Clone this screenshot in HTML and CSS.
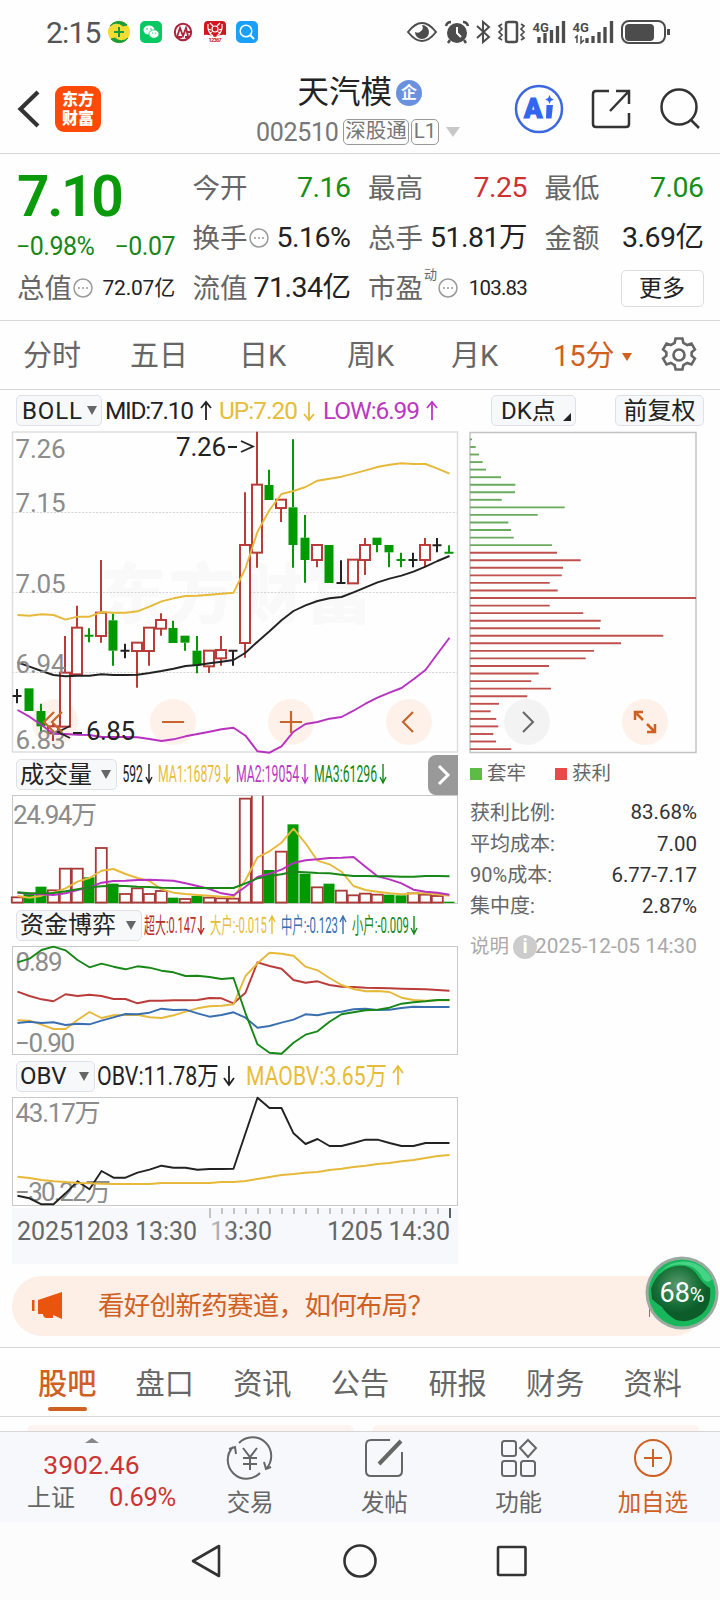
FILE: index.html
```html
<!DOCTYPE html>
<html lang="zh-CN">
<head>
<meta charset="utf-8">
<title>天汽模 002510</title>
<link rel="stylesheet" href="styles.css">
</head>
<body>
<header class="status">
  <span class="clock">2:15</span>
  <svg class="apps" width="152" height="26" viewBox="107 19 152 26">
    <circle cx="119" cy="32" r="11" fill="#f5dc32"/><path d="M110 26a11 11 0 0 1 17-1l-4 1a9 9 0 0 0-13 0zM128 38a11 11 0 0 1-17 1l4-1a9 9 0 0 0 13 0z" fill="#1b9c3c" stroke="#1b9c3c"/><path d="M119 27v10M114 32h10" stroke="#1b9c3c" stroke-width="2"/>
    <rect x="140" y="21" width="22" height="22" rx="5" fill="#07c862"/><ellipse cx="149" cy="30" rx="5.5" ry="4.6" fill="#fff"/><ellipse cx="154" cy="34" rx="5" ry="4.2" fill="#fff" stroke="#07c862" stroke-width=".8"/><circle cx="147" cy="29" r=".8" fill="#07c862"/><circle cx="151" cy="29" r=".8" fill="#07c862"/><circle cx="152.400" cy="33" r=".6" fill="#07c862"/><circle cx="155.600" cy="33" r=".6" fill="#07c862"/>
    <circle cx="183" cy="32" r="8.200" fill="#fff" stroke="#a9243a" stroke-width="2"/><path d="M177 37l3-9 3 8 3-8 2 8M178 37h4M185 37h5M187 32h5" fill="none" stroke="#a9243a" stroke-width="1.800"/>
    <path d="M208 21h14a4 4 0 0 1 4 4v10q-5-1-11 2-6-3-11-2v-10a4 4 0 0 1 4-4z" fill="#d0161f"/><circle cx="215" cy="29" r="3" fill="none" stroke="#fff" stroke-width="1.200"/><path d="M208 24q-1 8 5 12M222 24q1 8-5 12M210 23l3 3M220 23l-3 3M208 29l3 1M222 29l-3 1M209 33l3-1M221 33l-3-1" fill="none" stroke="#fff" stroke-width="1.200"/><text x="208.500" y="42" font-size="5.500" font-weight="700" fill="#d0161f" textLength="13">12367</text>
    <rect x="236" y="21" width="22" height="22" rx="5" fill="#18a0fb"/><circle cx="246" cy="31" r="5.800" fill="none" stroke="#fff" stroke-width="1.500"/><path d="M250 35l4 4" stroke="#fff" stroke-width="2"/>
  </svg>
  <svg class="signals" width="266" height="28" viewBox="406 18 266 28" fill="none" stroke="#4c4c4c" stroke-width="2">
    <path d="M408 32q14-18 28 0q-14 18-28 0z"/><path d="M422 25a7 7 0 1 1-7 7q4 2 6-1 3-2 1-6z" fill="#4c4c4c" stroke="none"/>
    <circle cx="457" cy="33" r="10" fill="#4c4c4c" stroke="none"/><path d="M457 27v6l4 4" stroke="#fff"/><path d="M446 26q1-4 5-4M463 22q4 0 5 4M450 40l-2 3M464 40l2 3" stroke-width="2.500"/>
    <path d="M477 26l12 11-6 5v-20l6 5-12 11"/>
    <rect x="506" y="22" width="11" height="20" rx="2" stroke-width="2.500"/><path d="M502 24l-3 2 3 3-3 3 3 3-3 3 3 2M521 24l3 2-3 3 3 3-3 3 3 3-3 2" stroke-width="1.700"/>
    <g stroke-width="3.300"><path d="M539 37v6M545 33v10M551.500 30v13M557.500 26v17M563.500 21v22"/><path d="M587 38v5M593 36v7M599 32v11M605 27v16M611.500 21v22"/></g>
    <path d="M575 38l2-2v7M581 36v7l3-3" stroke-width="1.500"/>
    <g fill="#4c4c4c" stroke="none" font-size="13" font-weight="700"><text x="532.500" y="31.500">4G</text><text x="572.500" y="31.500">4G</text></g>
    <rect x="622" y="21" width="43" height="22" rx="7"/><rect x="625" y="24" width="29" height="17" rx="4" fill="#4c4c4c" stroke="none"/><path d="M668.500 29v6" stroke-width="3"/>
  </svg>
</header>

<nav class="topbar">
  <div class="top-left">
    <svg width="24" height="38" viewBox="0 0 24 38"><path d="M21 2L3.500 19 21 36" fill="none" stroke="#333" stroke-width="4.200"/></svg>
    <div class="logo"><span>东方</span><span>财富</span></div>
  </div>
  <div class="top-title">
    <div class="name"><span>天汽模</span><i class="badge">企</i></div>
    <div class="code"><span class="num">002510</span><b class="tag">深股通</b><b class="tag l1">L1</b><i class="tri"></i></div>
  </div>
  <svg class="top-icons" width="190" height="50" viewBox="513 84 190 50" fill="none" stroke="#333" stroke-width="2.500">
    <circle cx="539" cy="109" r="23" stroke="#3b68e0"/><text x="524" y="118" font-size="27" font-weight="900" fill="#3366ee" stroke="#3366ee" stroke-width="1.200">A</text><path d="M546.500 105h6.500l-1.500 13.500h-5.500z" fill="#3366ee" stroke="none"/><path d="M549.500 95l1.300 3 3 1.500-3 1.500-1.300 3-1.300-3-3-1.500 3-1.500z" fill="#3366ee" stroke="none"/>
    <path d="M609 91h-13q-3 0-3 3v30q0 3 3 3h30q3 0 3-3v-11M629 104v-13h-13M629 91l-19 20"/>
    <circle cx="679" cy="107" r="17.500"/><path d="M691 120l8 8"/>
  </svg>
</nav>

<section class="quote">
  <div class="price-col"><div class="price">7.10</div><div class="change"><span>−0.98%</span><span>−0.07</span></div><div class="cell"><span class="lab">总值</span><svg class="dots" viewBox="0 0 20 20"><circle cx="10" cy="10" r="9"/><path d="M5 10h2M9 10h2M13 10h2"/></svg><span class="val small">72.07亿</span></div></div>
  <div class="q-col">
    <div class="cell"><span class="lab">今开</span><span class="val down">7.16</span></div>
    <div class="cell"><span class="lab">换手</span><svg class="dots" viewBox="0 0 20 20"><circle cx="10" cy="10" r="9"/><path d="M5 10h2M9 10h2M13 10h2"/></svg><span class="val">5.16%</span></div>
    <div class="cell"><span class="lab">流值</span><span class="val">71.34亿</span></div>
  </div>
  <div class="q-col">
    <div class="cell"><span class="lab">最高</span><span class="val up">7.25</span></div>
    <div class="cell"><span class="lab">总手</span><span class="val">51.81万</span></div>
    <div class="cell"><span class="lab">市盈</span><sup>动</sup><svg class="dots" viewBox="0 0 20 20"><circle cx="10" cy="10" r="9"/><path d="M5 10h2M9 10h2M13 10h2"/></svg><span class="val small pe">103.83</span></div>
  </div>
  <div class="q-col">
    <div class="cell"><span class="lab">最低</span><span class="val down">7.06</span></div>
    <div class="cell"><span class="lab">金额</span><span class="val">3.69亿</span></div>
    <div class="cell"><button class="more">更多</button></div>
  </div>
</section>

<nav class="periods">
  <span>分时</span><span>五日</span><span>日K</span><span>周K</span><span>月K</span><span class="on">15分<i></i></span>
  <svg width="36" height="36" viewBox="-18 -18 36 36" fill="none" stroke="#666" stroke-width="2.700"><path d="M-3.500-16h7l1 4.500 4 2.300 4.400-1.500 3.500 6-3.400 3v3.400l3.400 3-3.500 6-4.400-1.500-4 2.300-1 4.500h-7l-1-4.500-4-2.300-4.400 1.500-3.500-6 3.400-3v-3.400l-3.400-3 3.500-6 4.400 1.500 4-2.300z" transform="translate(0 -1) scale(.97)"/><circle r="5.500"/></svg>
</nav>

<main class="charts">
  <div class="left">
    <div class="head"><button class="pick w1"><span>BOLL</span><i></i></button>
      <svg width="350" height="41" viewBox="104 390 350 41" font-size="24.500">
        <g fill="#222"><text x="105" y="419" textLength="89">MID:7.10</text><path class="ar" stroke="#222" d="M206 420v-18m-5 6l5-6 5 6"/></g>
        <g fill="#e6bd3a"><text x="219" y="419" textLength="79">UP:7.20</text><path class="ar" stroke="#e6bd3a" d="M309 402v18m-5-6l5 6 5-6"/></g>
        <g fill="#b93ac0"><text x="323" y="419" textLength="97">LOW:6.99</text><path class="ar" stroke="#b93ac0" d="M432 420v-18m-5 6l5-6 5 6"/></g>
      </svg>
    </div>
    <svg id="kline" width="446" height="323" viewBox="12 431 446 323">
      <text x="100" y="618" font-size="66" font-weight="900" fill="#f9f9f9" textLength="272">东方财富</text>
      <path d="M12 512.500h446M12 592.500h446M12 672.500h446" stroke="#d4d4d4" stroke-dasharray="2 1.500"/>
      <rect x="12.500" y="432" width="445" height="320" fill="none" stroke="#dedede" stroke-width="1.500"/>
      <g fill="#fef1ea"><circle cx="55" cy="722" r="23"/><circle cx="173" cy="722" r="23"/><circle cx="291" cy="722" r="23"/><circle cx="409" cy="722" r="23"/></g>
      <g id="candles"></g>
      <g id="klines" class="ln"></g>
      <g class="axis"><text x="15.500" y="458" textLength="50">7.26</text><text x="15.500" y="512" textLength="50">7.15</text><text x="15.500" y="593" textLength="50">7.05</text><text x="15.500" y="673" textLength="50">6.94</text><text x="15.500" y="749" textLength="50">6.83</text></g>
      <g fill="#222" font-size="26"><text x="176" y="456" textLength="50">7.26</text><path class="ar" stroke="#222" d="M228 447h9M241 441l12 5.500-12 5.500"/><text x="86" y="740" textLength="49">6.85</text><path class="ar" stroke="#222" d="M73 733h9M70 726l-12 6 12 6"/></g>
      <g fill="none" stroke="#c7672d" stroke-width="2.200"><path d="M54 712l-10 10 10 10M62 712l-10 10 10 10M162 722h22M280 722h22M291 711v22M413 712l-10 10 10 10"/></g>
    </svg>
    <div class="head"><button class="pick w2"><span>成交量</span><i></i></button>
      <svg width="300" height="41" viewBox="121 754 300 41" font-size="24">
        <g fill="#222"><text transform="translate(122.500 782) scale(.5 1)">592</text><path class="ar thin" stroke="#222" d="M149 764v19m-3-6l3 6 3-6"/></g>
        <g fill="#e6bd3a"><text transform="translate(158 782) scale(.511 1)">MA1:16879</text><path class="ar thin" stroke="#e6bd3a" d="M227 764v19m-3-6l3 6 3-6"/></g>
        <g fill="#b93ac0"><text transform="translate(236 782) scale(.511 1)">MA2:19054</text><path class="ar thin" stroke="#b93ac0" d="M305 764v19m-3-6l3 6 3-6"/></g>
        <g fill="#178717"><text transform="translate(314 782) scale(.511 1)">MA3:61296</text><path class="ar thin" stroke="#178717" d="M383 764v19m-3-6l3 6 3-6"/></g>
      </svg>
      <div class="next"><svg width="14" height="22" viewBox="0 0 14 22"><path d="M3 2l9 9-9 9" fill="none" stroke="#fff" stroke-width="3"/></svg></div>
    </div>
    <svg id="vol" width="446" height="109" viewBox="12 795 446 109">
      <rect class="frame" x="12.500" y="795.500" width="445" height="108"/>
      <g class="axis"><text x="13" y="824" textLength="84">24.94万</text></g>
      <g id="bars"></g><g id="vlines" class="ln"></g>
    </svg>
    <div class="head tall"><button class="pick w3"><span>资金博弈</span><i></i></button>
      <svg width="300" height="42" viewBox="143 904 300 42" font-size="22">
        <g fill="#b82c2c"><text transform="translate(144 933) scale(.498 1)">超大:0.147</text><path class="ar thin" stroke="#b82c2c" d="M201 916v18m-3-6l3 6 3-6"/></g>
        <g fill="#e6bd3a"><text transform="translate(210 933) scale(.515 1)">大户:-0.015</text><path class="ar thin" stroke="#e6bd3a" d="M272 934v-18m-3 6l3-6 3 6"/></g>
        <g fill="#3a6faf"><text transform="translate(281 933) scale(.515 1)">中户:-0.123</text><path class="ar thin" stroke="#3a6faf" d="M343 934v-18m-3 6l3-6 3 6"/></g>
        <g fill="#178717"><text transform="translate(352 933) scale(.515 1)">小户:-0.009</text><path class="ar thin" stroke="#178717" d="M414 916v18m-3-6l3 6 3-6"/></g>
      </svg>
    </div>
    <svg id="fund" width="446" height="109" viewBox="12 946 446 109">
      <rect class="frame" x="12.500" y="946.500" width="445" height="108"/>
      <g class="axis"><text x="15.500" y="971" textLength="47">0.89</text><text x="15" y="1052" textLength="60">−0.90</text></g>
      <g id="flines" class="ln"></g>
    </svg>
    <div class="head tall"><button class="pick w4"><span>OBV</span><i></i></button>
      <svg width="320" height="42" viewBox="96 1055 320 42" font-size="26">
        <g fill="#222"><text transform="translate(97 1085) scale(.823 1)">OBV:11.78万</text><path class="ar" stroke="#222" d="M229 1066v19m-5-7l5 7 5-7"/></g>
        <g fill="#e6bd3a"><text transform="translate(246 1085) scale(.814 1)">MAOBV:3.65万</text><path class="ar" stroke="#e6bd3a" d="M398 1085v-19m-5 7l5-7 5 7"/></g>
      </svg>
    </div>
    <svg id="obv" width="446" height="109" viewBox="12 1097 446 109">
      <rect class="frame" x="12.500" y="1097.500" width="445" height="108"/>
      <g class="axis"><text x="15.500" y="1122" textLength="85">43.17万</text><text x="15" y="1201" textLength="96">−30.22万</text></g>
      <g id="olines" class="ln"></g>
    </svg>
    <svg class="time" width="446" height="56" viewBox="12 1208 446 56">
      <g id="ticks"></g>
      <g fill="#666" font-size="25"><text x="17" y="1240" textLength="180">20251203 13:30</text><text x="210" y="1240" textLength="62" fill="url(#fade)">13:30</text><text x="327" y="1240" textLength="123">1205 14:30</text></g>
      <defs><linearGradient id="fade"><stop offset="0" stop-color="#ccc"/><stop offset=".4" stop-color="#666"/></linearGradient></defs>
    </svg>
  </div>

  <aside class="right">
    <div class="head rhead"><button class="pick dk"><span>DK点</span><i></i></button><button class="pick fq"><span>前复权</span></button></div>
    <svg id="chips" width="229" height="323" viewBox="469 431 229 323">
      <rect x="470" y="432.500" width="226" height="320" fill="none" stroke="#c4c4c4" stroke-width="1.500"/>
      <g id="chiplines"></g>
      <circle cx="527" cy="722" r="23" fill="#f3f3f3"/><path d="M523 712l10 10-10 10" fill="none" stroke="#666" stroke-width="2"/>
      <circle cx="645" cy="722" r="23" fill="#fef1ea"/><path d="M643 712h-8v8M635 712l8 8M647 732h8v-8M655 732l-8-8" fill="none" stroke="#d0601f" stroke-width="2.500"/>
    </svg>
    <div class="legend"><span><i class="g"></i>套牢</span><span><i class="r"></i>获利</span></div>
    <dl>
      <div><dt>获利比例:</dt><dd>83.68%</dd></div>
      <div><dt>平均成本:</dt><dd>7.00</dd></div>
      <div><dt>90%成本:</dt><dd>6.77-7.17</dd></div>
      <div><dt>集中度:</dt><dd>2.87%</dd></div>
    </dl>
    <div class="note"><span>说明</span><i>i</i><time>2025-12-05 14:30</time></div>
  </aside>
</main>

<section class="promo">
  <div class="banner">
    <svg width="32" height="28" viewBox="0 0 32 28"><path d="M30 0v27l-9-4v3h-7q-3-1-3-4H6V8zM0 8h2.500v11H0z" fill="#e9550c"/></svg>
    <span>看好创新药赛道，如何布局？</span><i></i>
  </div>
  <div class="ball"><svg viewBox="0 0 74 74" width="74" height="74"><defs><radialGradient id="orb" cx=".45" cy=".35"><stop offset="0" stop-color="#5d9b70"/><stop offset=".7" stop-color="#177038"/><stop offset="1" stop-color="#0d5d2b"/></radialGradient></defs><circle cx="37" cy="37" r="36.500" fill="#9aaa9f"/><circle cx="37" cy="37" r="33.500" fill="#19b75b"/><path d="M6 33a31 31 0 0 1 34-23q8 2 13 10t12 12q2 17-8 26-13 10-26 6-10-6-14-13-6-4-10-8z" fill="url(#orb)"/><path d="M12 20q12-17 33-14 14 3 22 17-4 6-9 0-6-13-18-14-16-3-28 11z" fill="#45d385"/></svg><b>68<small>%</small></b></div>
</section>

<nav class="tabs"><span class="on">股吧</span><span>盘口</span><span>资讯</span><span>公告</span><span>研报</span><span>财务</span><span>资料</span></nav>
<div class="feed"><i></i><i></i></div>

<footer class="bottom">
  <div class="index"><i></i><strong>3902.46</strong><div><span>上证</span><em>0.69%</em></div></div>
  <div class="act"><svg viewBox="0 0 44 44"><path d="M11 7a18 18 0 0 1 27 26M32 37a18 18 0 0 1-27-26M1 13l6-2 1 7M43 31l-5 2-2-7M15 12l7 9 7-9M22 21v13M15 22h14M15 28h14"/></svg><span>交易</span></div>
  <div class="act"><svg viewBox="0 0 44 44"><path d="M28 4H9Q4 4 4 9v26q0 5 5 5h26q5 0 5-5V16"/><path d="M17 28L39 5" stroke-width="4"/></svg><span>发帖</span></div>
  <div class="act"><svg viewBox="0 0 44 44"><rect x="5" y="5" width="14" height="15" rx="2.500"/><rect x="5" y="25" width="14" height="15" rx="2.500"/><rect x="24" y="25" width="14" height="15" rx="2.500"/><path d="M31 4l8 8-8 9-8-9z"/></svg><span>功能</span></div>
  <div class="act hot"><svg viewBox="0 0 44 44"><circle cx="22" cy="22" r="18"/><path d="M22 13v18M13 22h18"/></svg><span>加自选</span></div>
</footer>
<div class="sysnav">
  <svg width="336" height="36" viewBox="191 1543 336 36" fill="none" stroke="#333" stroke-width="2.600" stroke-linejoin="round"><path d="M219 1546v30l-26-15z"/><circle cx="360" cy="1561" r="15.500"/><rect x="498" y="1547" width="27.500" height="28" rx="1"/></svg>
</div>
<script src="app.js"></script>
</body>
</html>
```
FILE: styles.css
```css
* { box-sizing: border-box; }
body { margin: 0; width: 720px; height: 1600px; overflow: hidden; background: #fefefe; color: #333; font-family: Roboto, "Noto Sans CJK SC", sans-serif; line-height: 1; }
svg { display: block; flex: none; overflow: visible; }
i, em { font-style: normal; }
button { font: inherit; color: inherit; padding: 0; }

.status { height: 64px; display: flex; align-items: center; padding: 0 48px 0 46px; }
.clock { font-size: 30px; width: 61px; color: #555; letter-spacing: -0.8px; padding-top: 1px; }
.signals { margin-left: auto; }

.topbar { height: 90px; border-bottom: 1px solid #d6d6d6; display: grid; grid-template-columns: 257px 256px 1fr; align-items: start; }
.top-left { display: flex; align-items: center; gap: 14px; padding: 22px 0 0 17px; }
.logo { width: 46px; height: 46px; background: #fd4a08; border-radius: 9px; display: flex; flex-direction: column; justify-content: center; align-items: center; color: #fff; font-weight: 900; font-size: 16px; line-height: 19px; }
.name { display: flex; align-items: center; gap: 4px; height: 34px; margin-top: 12px; padding-left: 40.500px; font-size: 31.500px; color: #222; white-space: nowrap; }
.badge { width: 26px; height: 26px; border-radius: 50%; background: #6a90e0; color: #fff; font-size: 16px; font-weight: 700; display: grid; place-items: center; line-height: 1; }
.code { display: flex; align-items: center; height: 26px; margin-top: 9px; font-size: 25px; color: #777; }
.num { width: 86px; margin-left: -1px; margin-right: 1px; letter-spacing: -0.300px; }
.tag { height: 26px; border: 1.500px solid #999; border-radius: 5px; font-weight: 400; font-size: 20.500px; line-height: 23px; width: 66px; text-align: center; white-space: nowrap; }
.tag.l1 { width: 28px; margin-left: 2px; }
.tri { border: 7.500px solid transparent; border-top: 10px solid #c8c8c8; border-bottom: 0; margin-left: 7px; }
.top-icons { margin-top: 20px; }

.quote { height: 167px; border-bottom: 1px solid #d6d6d6; display: grid; grid-template-columns: 158px 158px 159px 159px; column-gap: 17.500px; padding: 9px 16px 0 17px; }
.price { height: 66px; font-size: 57px; line-height: 67px; font-weight: 600; color: #0a9a0a; letter-spacing: -2.400px; }
.change { height: 34px; display: flex; justify-content: space-between; align-items: center; font-size: 25px; color: #178717; letter-spacing: -0.500px; margin-left: -1px; padding-top: 1px; }
.cell { height: 50px; display: flex; align-items: center; color: #222; }
.lab { font-size: 27.500px; color: #666; padding-top: 2px; }
.val { margin-left: auto; font-size: 28.500px; letter-spacing: -0.500px; white-space: nowrap; padding-top: 1px; }
.val.small { font-size: 21px; letter-spacing: -0.200px; }
.val.pe { font-size: 20.500px; letter-spacing: -0.800px; }
.down { color: #178f17; }
.up { color: #cf3131; }
.dots { width: 20px; height: 20px; margin-left: 1px; fill: none; stroke: #999; stroke-width: 1.500; }
sup { font-size: 13px; color: #666; align-self: flex-start; margin: 5px 0 0 1px; }
.more { margin-left: auto; width: 83px; height: 37px; border: 1.500px solid #ddd; border-radius: 5px; background: #fff; color: #222; font-size: 23px; }

.periods { height: 69px; border-bottom: 1px solid #d6d6d6; display: grid; grid-template-columns: 107px 109px 108px 104px 102px 108px 36px; align-items: center; padding-left: 23px; font-size: 29px; color: #666; }
.periods span { padding-top: 3px; }
.periods .on { color: #d0601f; display: flex; align-items: center; gap: 7px; }
.periods .on i { border: 5px solid transparent; border-top: 8px solid #d0601f; border-bottom: 0; }

.charts { height: 874px; display: grid; grid-template-columns: 446px 236px; column-gap: 11px; padding-left: 12px; }
.head { height: 41px; display: flex; align-items: center; padding: 0 0 0 4px; }
.head.tall { height: 42px; }
.pick { height: 31px; border: 1.500px solid #dfe1e6; border-radius: 5px; background: #f7f8fa; color: #222; display: flex; align-items: center; justify-content: space-between; padding: 0 5px 0 3px; font-size: 24px; line-height: 28px; white-space: nowrap; flex: none; }
.pick i { border: 5.500px solid transparent; border-top: 9px solid #666; border-bottom: 0; }
.w1 { width: 86px; margin-right: 2px; padding: 0 4px 0 5px; } .w1 span { letter-spacing: 0.900px; }
.w2 { width: 101px; margin-right: 4px; }
.w3 { width: 126px; margin-right: 1px; }
.w4 { width: 79px; margin-right: 1px; }
.next { width: 30px; height: 40px; margin-left: auto; background: #999; border-radius: 8px 0 0 8px; display: grid; place-items: center; }
.ar { fill: none; stroke-width: 1.800; }
.thin { stroke-width: 1.400; }
.axis { fill: #8c8c8c; font-size: 26px; }
.frame { fill: none; stroke: #c8c8c8; }
.ln path { fill: none; stroke-width: 1.900; stroke-linejoin: round; }
.time { margin-top: 2px; background: #f7f8fb; }

.rhead { padding: 0 1px 0 22px; justify-content: space-between; }
.pick.dk { width: 85px; padding: 0 4px 0 9px; }
.dk i { border: 0; border-left: 8px solid transparent; border-bottom: 8px solid #222; align-self: flex-end; margin-bottom: 4px; }
.pick.fq { width: 89px; padding: 0; justify-content: center; }
.legend { height: 39px; display: flex; align-items: center; gap: 29px; padding-left: 1px; font-size: 19.500px; color: #666; }
.legend span { display: flex; align-items: center; gap: 5px; }
.legend i { width: 12px; height: 12px; background: #5dbb46; }
.legend .r { background: #e84a4a; }
dl { margin: 4px 0 0; width: 228px; }
dl div { height: 31.200px; display: flex; align-items: center; justify-content: space-between; font-size: 20px; }
dt { color: #666; padding-left: 1px; } dd { margin: 0; color: #333; font-size: 20.500px; }
.note { height: 50px; width: 228px; display: flex; align-items: center; font-size: 19.500px; color: #aaa; padding-left: 1px; }
.note i { width: 24px; height: 24px; border-radius: 50%; background: #ccc; color: #fff; font-weight: 700; text-align: center; line-height: 24px; margin: 0 -3px 0 4px; flex: none; }
.note time { margin-left: auto; white-space: nowrap; font-size: 20.800px; }

.promo { height: 84px; border-bottom: 1px solid #d6d6d6; padding: 12px 16px 0 12px; position: relative; }
.banner { height: 60px; border-radius: 30px; background: #fdeee6; display: flex; align-items: center; gap: 34px; padding: 0 54px 0 20px; font-size: 26.500px; color: #d0601f; }
.banner span { letter-spacing: -0.700px; }
.banner i { width: 1.500px; height: 22px; margin-left: auto; background: #d0601f; }
.ball { position: absolute; left: 645px; top: -8px; width: 74px; height: 74px; }
.ball b { position: absolute; inset: 0; display: flex; align-items: center; justify-content: center; color: #fff; font-size: 27px; font-weight: 400; }
.ball small { font-size: 20px; padding-top: 4px; }

.tabs { height: 69px; border-bottom: 1px solid #d6d6d6; display: flex; justify-content: space-between; padding: 0 38px; font-size: 29.200px; color: #666; }
.tabs span { height: 64px; line-height: 72px; display: flex; flex-direction: column; align-items: center; }
.tabs .on { color: #d0601f; font-weight: 500; }
.tabs .on::after { content: ""; width: 39px; height: 4px; flex: none; margin-top: -13px; border-radius: 2px; background: #d0601f; }
.feed { height: 14px; padding: 8px 21px 0 27px; display: grid; grid-template-columns: 1fr 1fr; gap: 18px; }
.feed i { background: #fdf3f1; border-radius: 12px 12px 0 0; }

.bottom { height: 91px; border-top: 1px solid #d6d6d6; background: #f7f8fb; display: grid; grid-template-columns: 183px repeat(4, 134.250px); }
.index { display: flex; flex-direction: column; align-items: center; color: #cc3434; padding-top: 6px; }
.index i { border: 7px solid transparent; border-bottom: 5px solid #888; border-top: 0; }
.index strong { font-weight: 400; font-size: 26.500px; line-height: 32px; margin-top: 6px; }
.index div { display: flex; align-items: center; justify-content: space-between; width: 149px; height: 34px; font-size: 24px; margin-left: 20px; }
.index span { color: #666; }
.index em { font-size: 25.500px; letter-spacing: -0.300px; }
.act { display: flex; flex-direction: column; align-items: center; padding-top: 4px; gap: 12px; font-size: 23.500px; color: #666; }
.act svg { width: 44px; height: 44px; fill: none; stroke: #666; stroke-width: 2; }
.hot { color: #d0601f; }
.hot svg { stroke: #d0601f; }
.sysnav { height: 78px; background: #fcfcfc; display: flex; align-items: center; padding-left: 191px; }
```
FILE: app.js
```js
const x = i => 17 + 12 * i;
const RED = '#b93c3a', GREEN = '#009a00', BLACK = '#222';
const YEL = '#e6b93a', PUR = '#b832c0', DGREEN = '#178717', BLUE = '#3a6faf';
const el = id => document.getElementById(id);

// [colour, body top, body bottom, wick top, wick bottom]; heights are in thirds of a pixel
const candles = [
  ['k',933,933,912,955],['g',910,978,910,978],['g',978,1024,956,1045],['r',1024,1045,1015,1068],
  ['r',863,1025,753,1025],['r',728,868,662,868],['g',752,752,730,772],['r',683,753,525,773],
  ['g',706,797,686,842],['k',797,797,776,820],['r',773,798,773,908],['r',728,798,728,842],
  ['r',705,731,685,752],['g',729,774,707,774],['g',752,773,752,797],['g',797,842,753,865],
  ['r',797,844,797,864],['r',795,820,753,842],['k',797,797,797,842],['r',480,774,322,818],
  ['r',299,503,140,548],['g',300,345,254,345],['r',344,369,344,411],['g',367,480,163,548],
  ['g',458,525,390,593],['r',480,525,480,547],['g',480,594,480,594],['k',594,594,526,594],
  ['r',524,595,524,595],['r',480,525,459,570],['g',458,480,458,502],['g',480,502,480,547],
  ['g',525,525,503,547],['k',525,525,503,547],['r',480,525,459,545],['k',481,481,459,502],['g',503,503,481,503]
];
const tone = { r: RED, g: GREEN, k: BLACK };
el('candles').innerHTML = candles.map(([c, t, b, wt, wb], i) => {
  const y = v => 385 + v / 3, s = tone[c], cx = x(i);
  if (t === b) return `<path d="M${cx} ${y(wt)}V${y(wb)}M${cx - 4.5} ${y(t)}h9" stroke="${s}" stroke-width="2"/>`;
  const wick = `<path d="M${cx} ${y(wt)}V${y(t)}M${cx} ${y(b)}V${y(wb)}" stroke="${s}" stroke-width="2"/>`;
  return wick + (c === 'r'
    ? `<rect x="${cx - 5}" y="${y(t)}" width="10" height="${(b - t) / 3}" fill="#fff" stroke="${s}" stroke-width="2"/>`
    : `<rect x="${cx - 4.5}" y="${y(t)}" width="9" height="${(b - t) / 3}" fill="${s}"/>`);
}).join('');

const draw = (id, base, sets) => {
  el(id).innerHTML = sets.map(([c, pts]) =>
    `<path stroke="${c}" d="M${pts.map((v, i) => x(i) + 0.5 + ' ' + (base + v / 3).toFixed(1)).join('L')}"/>`).join('');
};
draw('klines', 385, [
  [YEL, [690,692,688,690,704,695,695,681,683,683,679,665,649,640,633,632,629,626,623,550,440,375,327,318,306,287,281,275,266,256,246,239,235,237,237,251,266]],
  [BLACK, [832,845,858,870,874,872,872,868,870,870,869,864,858,851,843,840,835,830,825,803,770,739,706,678,661,648,640,636,622,607,592,581,572,560,545,528,513]],
  [PUR, [975,995,1020,1046,1047,1049,1050,1056,1056,1056,1057,1062,1068,1063,1054,1047,1040,1033,1028,1052,1099,1103,1084,1040,1017,1011,1001,996,977,956,938,923,909,883,855,806,758]]
]);

const vols = 'r442 g432 g410 r421 r356 r356 g382 r294 g401 r432 r415 r432 r423 g443 r447 g438 r443 r445 r446 r146 r137 g360 r305 g223 g371 r412 g401 r422 r436 r431 r434 g434 g436 r430 r434 r438 g455'.split(' ');
el('bars').innerHTML = vols.map((v, i) => {
  const top = 750 + v.slice(1) / 3, bottom = 902.5, h = bottom - top, left = x(i) - 5.2;
  if (i === 20) return `<path d="M${left} ${top}V${bottom}h11V${top}" fill="#fff" stroke="#a83a38" stroke-width="1.8"/>`;
  return v[0] === 'r'
    ? `<rect x="${left}" y="${top}" width="11" height="${h}" fill="#fff" stroke="#a83a38" stroke-width="1.8"/>`
    : `<rect x="${x(i) - 5.5}" y="${top}" width="11" height="${h + 0.5}" fill="${GREEN}"/>`;
}).join('');
draw('vlines', 750, [
  [YEL, [438,443,437,428,415,395,384,362,357,372,384,393,418,428,432,435,437,440,442,390,322,304,278,236,280,332,343,365,408,420,425,430,433,430,430,433,437]],
  [PUR, [428,431,433,435,430,420,412,398,393,392,390,389,391,392,400,408,417,430,436,410,381,371,359,339,331,328,324,323,321,350,379,388,400,419,425,428,434]],
  [DGREEN, [427,430,430,429,424,418,412,409,408,408,410,411,413,414,414,414,414,414,414,400,385,378,373,365,367,369,370,374,378,378,379,379,380,380,378,378,379]]
]);
draw('flines', 750, [
  [RED, [725,738,748,754,733,738,734,738,747,747,760,752,752,751,751,750,744,745,760,728,637,648,656,690,698,694,705,710,711,713,714,715,716,717,718,720,722]],
  [YEL, [811,812,824,837,837,810,786,804,796,795,794,802,804,796,785,775,769,767,763,678,640,608,611,617,650,661,684,705,717,724,723,726,743,750,752,751,751]],
  [BLUE, [819,815,819,817,825,821,823,812,802,792,793,788,776,780,779,790,800,795,787,803,833,828,818,809,793,796,788,785,778,776,780,779,774,770,771,771,771]],
  [DGREEN, [637,626,600,590,601,630,652,641,650,658,649,653,662,667,678,677,681,687,684,790,883,908,911,878,854,844,815,793,787,781,779,773,761,757,754,750,750]]
]);
draw('olines', 1050, [
  [BLACK, [437,445,463,463,430,394,418,363,383,383,368,359,347,353,353,359,357,357,356,250,143,174,174,250,282,267,288,288,279,269,269,279,288,288,279,279,279]],
  [YEL, [380,384,390,394,396,399,400,401,402,402,402,402,399,399,399,399,399,396,396,393,387,381,375,372,368,366,360,356,351,347,342,339,334,330,324,318,315]]
]);

let ticks = '';
for (let i = 0; i <= 20; i++) {
  const end = i === 20, tall = i === 0 || end;
  ticks += `<path d="M${210 + 12 * i} 1208v${tall ? 10 : 6}" stroke="${end ? '#444' : '#bbb'}" stroke-width="1.7"/>`;
}
el('ticks').innerHTML = ticks;

const chips = [36,47,57,68,78,123,166,165,125,314,233,145,153,161,276,291,362,309,305,269,293,708,269,370,422,420,610,483,402,377,267,236,214,273,202,117,92,109,115,100,108,154];
el('chiplines').innerHTML = chips.map((v, i) =>
  `<path d="M470 ${(439.4 + i * 7.553).toFixed(1)}H${(460 + v / 3).toFixed(1)}" stroke="${i < 15 ? '#6aaa5c' : '#c0504e'}" stroke-width="1.9"/>`).join('');
```
